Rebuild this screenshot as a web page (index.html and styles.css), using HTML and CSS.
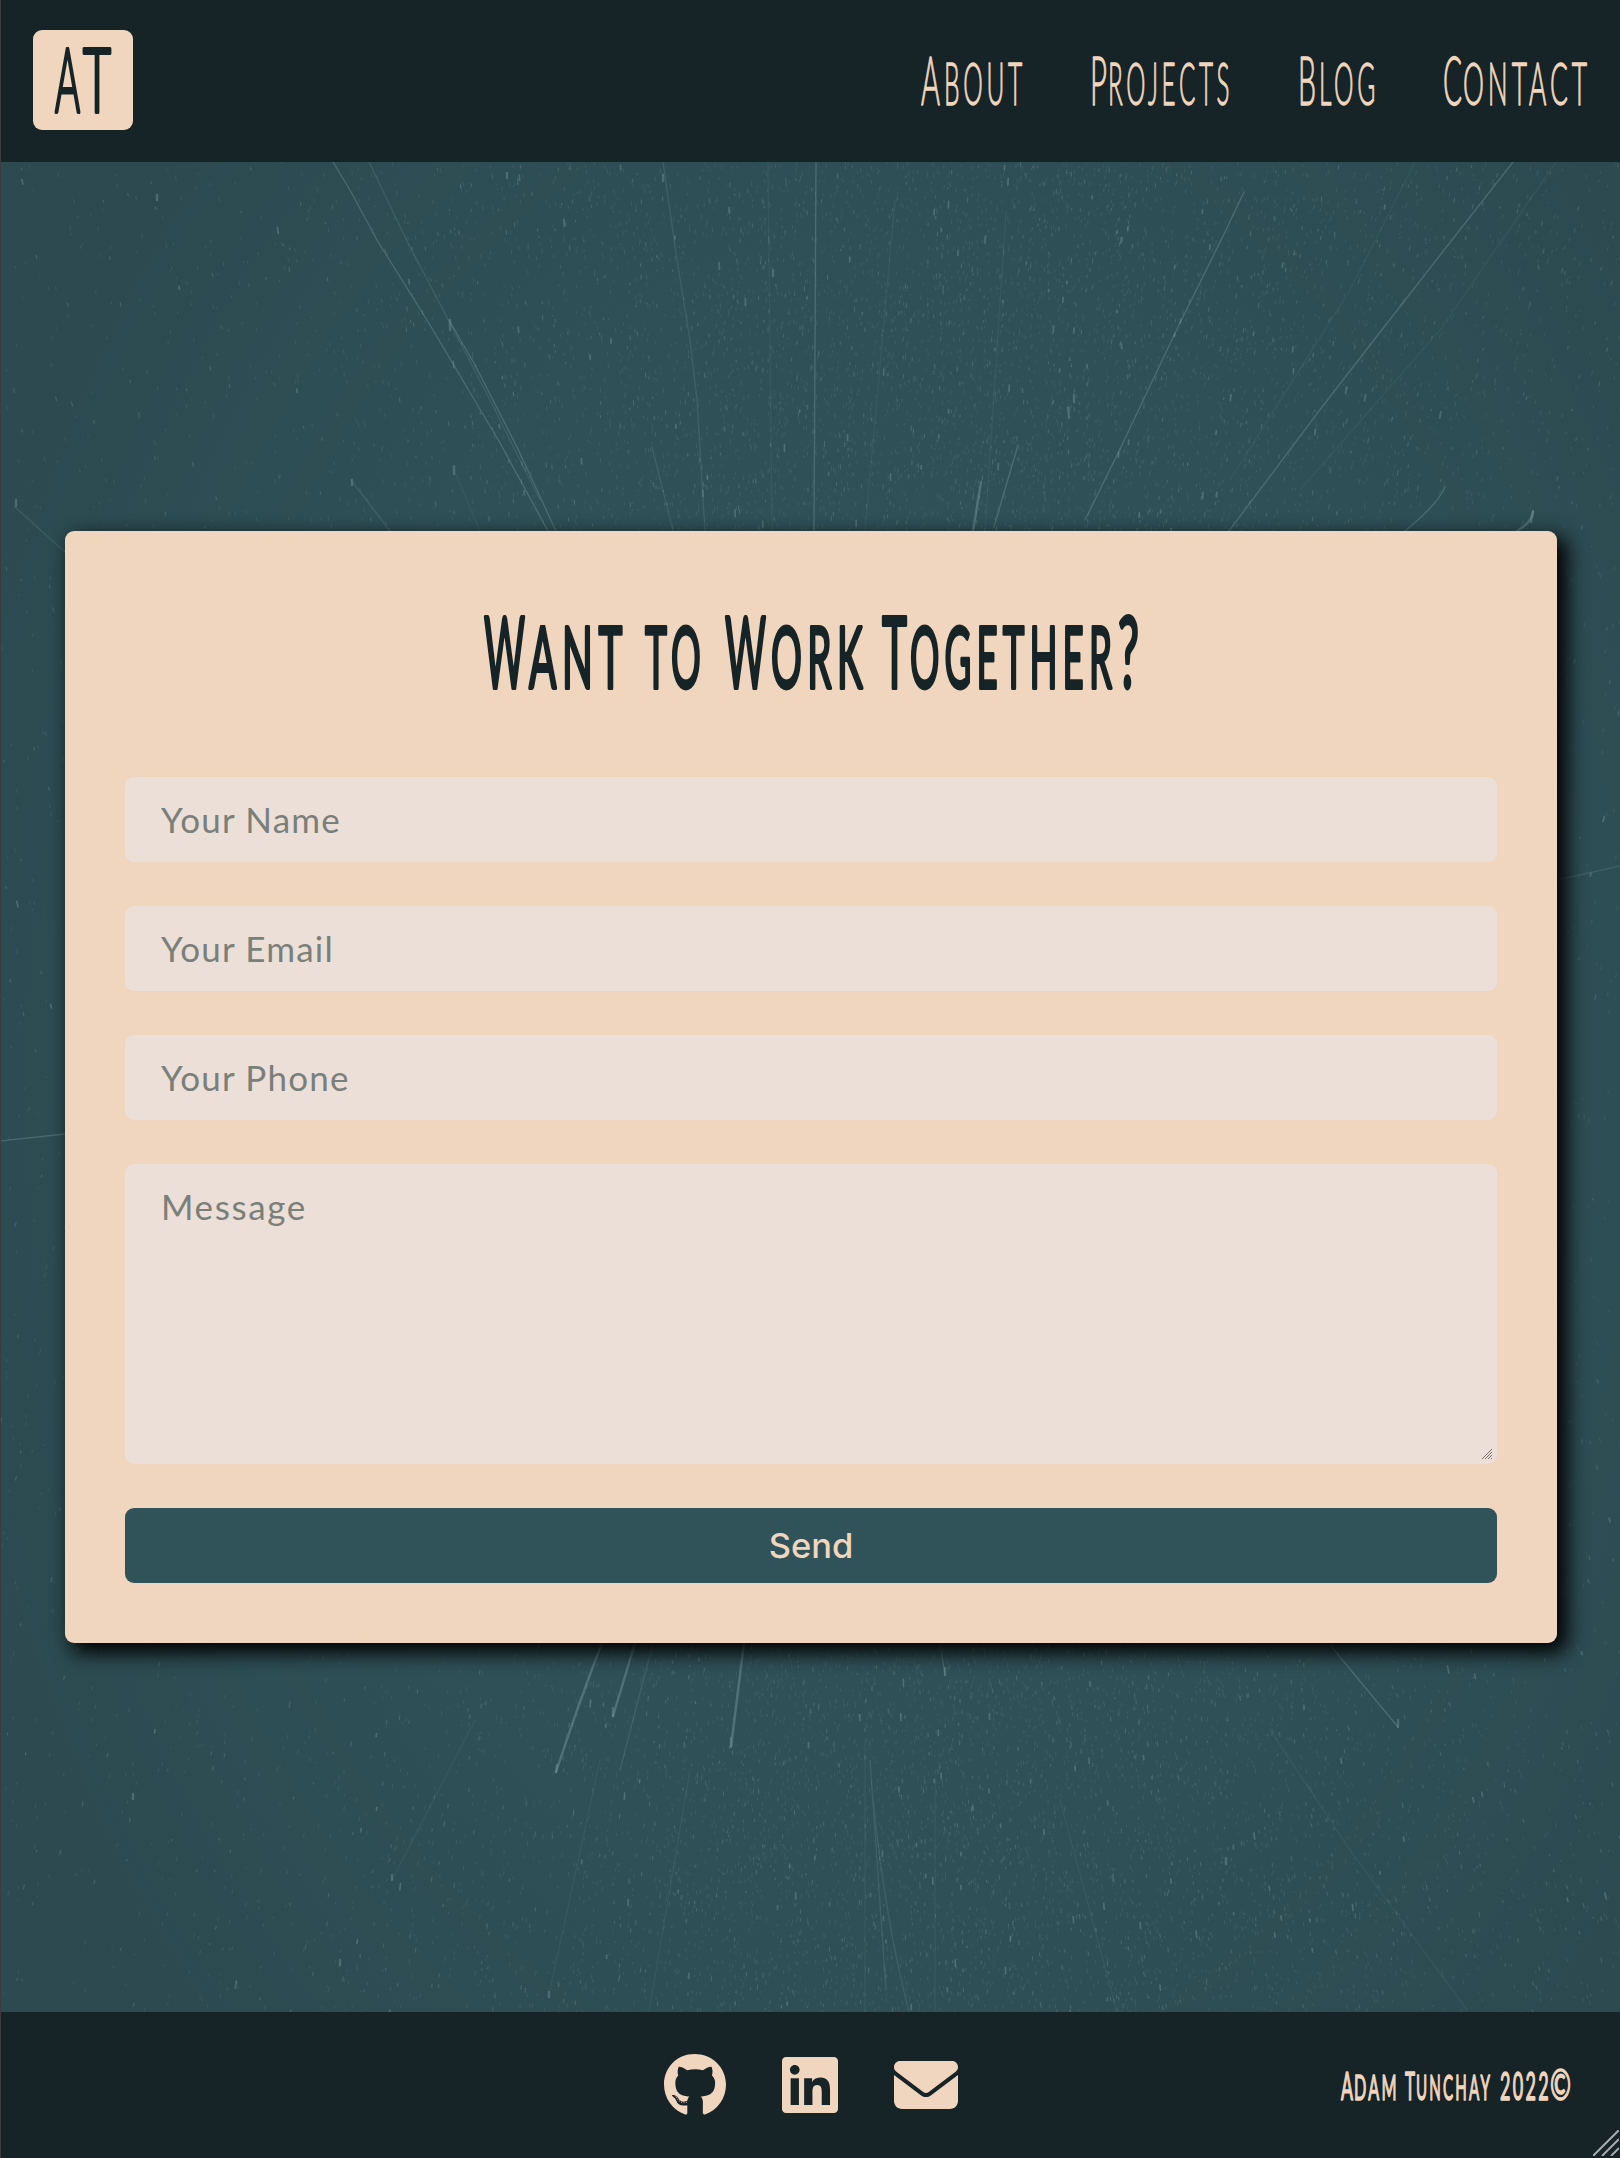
FILE: index.html
```html
<!DOCTYPE html>
<html lang="en">
<head>
<meta charset="utf-8">
<title>Adam Tunchay | Contact</title>
<link rel="stylesheet" href="styles.css">
</head>
<body>
<header class="header">
  <a class="logo" href="#" aria-label="AT">
    <svg class="lettering" width="100" height="100"><text class="logo-text" y="82"><tspan x="22" textLength="25" lengthAdjust="spacingAndGlyphs">A</tspan><tspan x="50" textLength="28" lengthAdjust="spacingAndGlyphs">T</tspan></text></svg>
  </a>
  <nav class="nav">
    <a href="#"><svg class="lettering" width="101" height="60"><text y="54.500"><tspan class="cap" x="-1" textLength="19" lengthAdjust="spacingAndGlyphs">A</tspan><tspan class="small" x="22" textLength="82" lengthAdjust="spacingAndGlyphs">BOUT</tspan></text></svg></a>
    <a href="#"><svg class="lettering" width="138" height="60"><text y="54.500"><tspan class="cap" x="-2" textLength="17" lengthAdjust="spacingAndGlyphs">P</tspan><tspan class="small" x="16" textLength="125" lengthAdjust="spacingAndGlyphs">ROJECTS</tspan></text></svg></a>
    <a href="#"><svg class="lettering" width="75" height="60"><text y="54.500"><tspan class="cap" x="-2" textLength="18" lengthAdjust="spacingAndGlyphs">B</tspan><tspan class="small" x="19" textLength="60" lengthAdjust="spacingAndGlyphs">LOG</tspan></text></svg></a>
    <a href="#"><svg class="lettering" width="148" height="60"><text y="54.500"><tspan class="cap" x="-1" textLength="19" lengthAdjust="spacingAndGlyphs">C</tspan><tspan class="small" x="19" textLength="128" lengthAdjust="spacingAndGlyphs">ONTACT</tspan></text></svg></a>
  </nav>
</header>

<main class="main">
  <svg class="stars" id="stars" viewBox="0 0 1619 1850" preserveAspectRatio="none" aria-hidden="true">
    <g class="trails" transform="translate(-1 -162)">
      <path d="M333 162L350 190 377 240 430 325 500 443 548 531"/>
      <path class="dim" d="M369 162L408 243 452 327 490 400 540 500"/>
      <path d="M449 320L475 365 517 447 556 531"/>
      <path class="dim" d="M663 162L677 260 690 340 697 400 705 531"/>
      <path d="M816 162L814 531"/>
      <path d="M1244 192L1226 230 1178 327 1121 447 1085 520"/>
      <path d="M1513 162L1448 245 1395 313 1322 407 1229 531"/>
      <path class="faint" d="M1556 162L1440 330 1300 490"/>
      <path class="faint" d="M1415 162L1350 290 1230 480"/>
      <path class="bright" d="M981 482L973 531"/>
      <path d="M1018 445L994 527"/>
      <path d="M1445 487Q1438 504 1405 531"/>
      <path class="bright" d="M1533 512Q1532 522 1517 531"/>
      <path class="dim" d="M15 507L65 552"/>
      <path class="dim" d="M351 480L390 531"/>
      <path class="dim" d="M652 447L673 531"/>
      <path class="faint" d="M454 470L480 531"/>
      <path class="faint" d="M768 162L772 531M1006 212L985 531M895 200L865 531"/>
      <path d="M0 1141L65 1134"/>
      <path class="dim" d="M1557 880L1620 866"/>
      <path class="bright" d="M602 1643Q578 1705 556 1772"/>
      <path class="bright" d="M635 1643L613 1716"/>
      <path class="dim" d="M653 1643L620 1770"/>
      <path class="bright" d="M744 1643L731 1747"/>
      <path d="M1330 1645L1398 1727"/>
      <path d="M940 1643L945 1675"/>
      <path class="dim" d="M872 1790Q885 1920 909 2012M870 1760L886 1990"/>
      <path class="faint" d="M475 1720L392 1880M690 1770L649 2012M1270 1730L1350 1850 1467 2010M1060 1800L1117 2012M600 1760L550 1990M865 1740V2012M935 1780V2012"/>
    </g>
    <g class="heads" transform="translate(-1 -162)">
      <path d="M1533 511l-2 11M1398 1720v7M945 1668v7M557 1765l-1 7M613 1708v8M731 1738v8M157 195v5M133 1794v5M392 1875v5M340 1960v5M549 1992v5M1226 1858v6M454 466v8M352 480v5M16 500v6M450 320v10M1068 408l1 10M1074 395v7M773 270v6M663 175v6M507 173v5"/>
    </g>
  </svg>
  <form class="card">
    <h1 class="title" aria-label="Want to Work Together?">
      <svg class="lettering" width="1372" height="142"><text y="97">
        <tspan class="cap" x="359" textLength="41" lengthAdjust="spacingAndGlyphs">W</tspan><tspan class="small" x="404" textLength="99" lengthAdjust="spacingAndGlyphs">ANT</tspan>
        <tspan class="small" x="520" textLength="61" lengthAdjust="spacingAndGlyphs">TO</tspan>
        <tspan class="cap" x="600" textLength="41" lengthAdjust="spacingAndGlyphs">W</tspan><tspan class="small" x="646" textLength="97" lengthAdjust="spacingAndGlyphs">ORK</tspan>
        <tspan class="cap" x="757" textLength="25" lengthAdjust="spacingAndGlyphs">T</tspan><tspan class="small" x="785" textLength="207" lengthAdjust="spacingAndGlyphs">OGETHER</tspan><tspan class="cap" x="993" textLength="21" lengthAdjust="spacingAndGlyphs">?</tspan></text></svg>
    </h1>
    <input class="field" type="text" placeholder="Your Name">
    <input class="field" type="email" placeholder="Your Email">
    <input class="field" type="tel" placeholder="Your Phone">
    <div class="message">
      <textarea class="field area" placeholder="Message"></textarea>
      <svg class="grip" width="10" height="10" viewBox="0 0 10 10"><path d="M0 10L10 0M3 10L10 3M6 10L10 6M9 10L10 9"/></svg>
    </div>
    <button class="send" type="button">Send</button>
  </form>
</main>

<footer class="footer">
  <div class="social">
    <a href="#" aria-label="GitHub"><svg width="62" height="64" viewBox="0 0 496 512"><path d="M165.900 397.400c0 2-2.300 3.600-5.200 3.600-3.300.3-5.600-1.300-5.600-3.600 0-2 2.300-3.600 5.200-3.600 3-.3 5.600 1.300 5.600 3.600zm-31.100-4.500c-.7 2 1.300 4.300 4.300 4.900 2.600 1 5.600 0 6.200-2s-1.300-4.300-4.300-5.200c-2.600-.7-5.500.3-6.200 2.300zm44.200-1.700c-2.900.7-4.900 2.600-4.600 4.900.3 2 2.900 3.300 5.900 2.600 2.900-.7 4.900-2.600 4.600-4.600-.3-1.900-3-3.200-5.900-2.900zM244.800 8C106.100 8 0 113.300 0 252c0 110.900 69.800 205.800 169.500 239.200 12.800 2.300 17.300-5.600 17.300-12.100 0-6.200-.3-40.400-.3-61.400 0 0-70 15-84.700-29.800 0 0-11.400-29.100-27.800-36.600 0 0-22.900-15.700 1.600-15.400 0 0 24.900 2 38.600 25.800 21.900 38.600 58.600 27.500 72.900 20.900 2.300-16 8.800-27.100 16-33.700-55.900-6.200-112.300-14.300-112.300-110.500 0-27.500 7.600-41.300 23.600-58.900-2.600-6.500-11.100-33.300 2.600-67.900 20.900-6.500 69 27 69 27 20-5.600 41.500-8.500 62.800-8.500s42.800 2.900 62.800 8.500c0 0 48.100-33.600 69-27 13.700 34.700 5.200 61.400 2.600 67.900 16 17.700 25.800 31.500 25.800 58.900 0 96.500-58.900 104.200-114.800 110.500 9.200 7.900 17 22.900 17 46.400 0 33.700-.3 75.400-.3 83.600 0 6.500 4.600 14.400 17.300 12.100C428.200 457.800 496 362.900 496 252 496 113.300 383.500 8 244.800 8zM97.200 352.900c-1.300 1-1 3.300.7 5.200 1.600 1.600 3.900 2.300 5.200 1 1.300-1 1-3.300-.7-5.200-1.600-1.600-3.900-2.300-5.200-1zm-10.800-8.100c-.7 1.300.3 2.900 2.300 3.900 1.600 1 3.600.7 4.300-.7.7-1.300-.3-2.900-2.300-3.900-2-.6-3.600-.3-4.300.7zm32.400 35.600c-1.600 1.300-1 4.300 1.300 6.200 2.300 2.300 5.200 2.600 6.500 1 1.300-1.300.7-4.300-1.300-6.200-2.200-2.300-5.200-2.600-6.500-1zm-11.400-14.700c-1.600 1-1.600 3.600 0 5.900 1.600 2.300 4.300 3.300 5.600 2.300 1.600-1.300 1.600-3.900 0-6.200-1.400-2.300-4-3.300-5.600-2z"/></svg></a>
    <a href="#" aria-label="LinkedIn"><svg width="56" height="64" viewBox="0 0 448 512"><path d="M416 32H31.900C14.300 32 0 46.500 0 64.300v383.400C0 465.500 14.300 480 31.900 480H416c17.600 0 32-14.500 32-32.300V64.300c0-17.800-14.400-32.300-32-32.300zM135.400 416H69V202.200h66.500V416zm-33.200-243c-21.300 0-38.500-17.300-38.500-38.500S80.900 96 102.200 96c21.200 0 38.500 17.300 38.500 38.500 0 21.300-17.200 38.500-38.500 38.500zm282.100 243h-66.400V312c0-24.800-.5-56.700-34.500-56.700-34.600 0-39.900 27-39.900 54.900V416h-66.400V202.200h63.700v29.200h.9c8.900-16.800 30.600-34.500 62.900-34.500 67.200 0 79.700 44.300 79.700 101.900V416z"/></svg></a>
    <a href="#" aria-label="Email"><svg width="64" height="64" viewBox="0 0 512 512"><path d="M48 64C21.500 64 0 85.500 0 112c0 15.100 7.100 29.300 19.200 38.400L236.800 313.600c11.400 8.500 27 8.500 38.400 0L492.800 150.400c12.100-9.100 19.200-23.300 19.200-38.400c0-26.500-21.500-48-48-48H48zM0 176V384c0 35.300 28.700 64 64 64H448c35.300 0 64-28.700 64-64V176L294.400 339.200c-22.800 17.100-54 17.100-76.800 0L0 176z"/></svg></a>
  </div>
  <p class="copyright"><svg class="lettering" width="230" height="44"><text y="36.500">
    <tspan class="cap" x="0" textLength="12" lengthAdjust="spacingAndGlyphs">A</tspan><tspan class="small" x="13" textLength="45" lengthAdjust="spacingAndGlyphs">DAM</tspan>
    <tspan class="cap" x="64" textLength="10" lengthAdjust="spacingAndGlyphs">T</tspan><tspan class="small" x="75" textLength="76" lengthAdjust="spacingAndGlyphs">UNCHAY</tspan>
    <tspan class="cap year" x="159" textLength="51" lengthAdjust="spacingAndGlyphs">2022</tspan><tspan class="mark" x="209" textLength="21" lengthAdjust="spacingAndGlyphs">©</tspan></text></svg></p>
  <svg class="corner" width="26" height="26" viewBox="0 0 26 26"><path d="M0 26L26 0M9 26L26 9M18 26L26 18"/></svg>
</footer>
<script src="stars.js"></script>
</body>
</html>
```

FILE: styles.css
```css
* { box-sizing: border-box; }

body {
  margin: 0;
  min-height: 2158px;
  display: flex;
  flex-direction: column;
  border-left: 1px solid #3c3b40;
  background: #162427;
  color: #f0d6be;
  font-family: Lato, "Open Sans", sans-serif;
}

a { color: inherit; display: block; }
svg { display: block; }

.lettering {
  overflow: visible;
  fill: currentColor;
  stroke: currentColor;
  stroke-linejoin: round;
  font-family: Lato, "Open Sans", sans-serif;
  font-weight: 300;
}

.header {
  height: 162px;
  padding: 0 28px 2px 32px;
  display: flex;
  align-items: center;
  justify-content: space-between;
}

.logo {
  width: 100px;
  height: 100px;
  border-radius: 9px;
  background: #f0d6be;
  color: #162427;
}
.logo-text { font-size: 89px; stroke-width: 4.2px; }

.nav { display: flex; gap: 69.5px; }
.nav .lettering { stroke-width: 1.3px; }
.nav .cap { font-size: 67px; }
.nav .small { font-size: 60px; letter-spacing: 9px; }

.main {
  position: relative;
  height: 1850px;
  padding: 0 63px 0 64px;
  display: flex;
  flex-direction: column;
  justify-content: center;
  background: radial-gradient(ellipse 60% 75% at 54% 50%, #305259 0%, #2f5057 60%, #2c4a50 100%);
}

.stars {
  position: absolute;
  inset: 0;
  width: 100%;
  height: 100%;
  overflow: hidden;
}
.trails { fill: none; stroke: #6f9297; stroke-width: 1.4; stroke-opacity: .42; stroke-linecap: round; }
.trails .bright { stroke-width: 2.4; stroke-opacity: .5; }
.trails .dim { stroke-opacity: .24; }
.trails .faint { stroke-opacity: .12; }
.heads { fill: none; stroke: #7c9a9d; stroke-width: 2.4; stroke-opacity: .4; stroke-linecap: round; }
.specks { fill: none; stroke: #8aa3a4; stroke-linecap: round; }

.card {
  position: relative;
  height: 1112px;
  padding: 60px;
  display: flex;
  flex-direction: column;
  gap: 44px;
  border-radius: 9px;
  background: #f0d6be;
  box-shadow: 8px 8px 20px 2px #000;
}

.title { margin: 0; height: 142px; color: #162427; }
.title .lettering { font-weight: 400; stroke-width: 3.8px; }
.title .cap { font-size: 98px; }
.title .small { font-size: 86px; letter-spacing: 12px; }

.field {
  display: block;
  width: 100%;
  height: 85px;
  padding: 0 36px 1px;
  border: 0;
  border-radius: 9px;
  background: #ecdfd7;
  color: #162427;
  font: 400 35px/44px Lato, "Open Sans", sans-serif;
  letter-spacing: 1.2px;
}
.field::placeholder { color: #7a7f7a; opacity: 1; }

.message { position: relative; height: 300px; }
.area { height: 300px; padding-top: 20px; resize: none; letter-spacing: 1.6px; }
.grip {
  position: absolute;
  right: 5px;
  bottom: 5px;
  stroke: #77726f;
  stroke-width: 1;
}

.send {
  height: 75px;
  padding: 1px 0 0;
  border: 0;
  border-radius: 9px;
  background: #305259;
  color: #f0d6be;
  font: 450 34.5px/74px Inter, sans-serif;
}

.footer {
  position: relative;
  height: 146px;
  padding: 0 49px 0 663px;
  display: flex;
  align-items: center;
  justify-content: space-between;
}
.social { display: flex; gap: 56px; fill: #f0d6be; }
.copyright { margin: 0; }
.copyright .lettering { font-weight: 400; stroke-width: 1.5px; }
.copyright .cap { font-size: 39px; }
.copyright .small { font-size: 35px; letter-spacing: 5px; }
.copyright .year { letter-spacing: 5px; }
.copyright .mark { font-size: 43px; }
.corner {
  position: absolute;
  right: 1px;
  bottom: 2px;
  stroke: #a9abac;
  stroke-width: 2;
}
```

FILE: stars.js
```js
// Scatters faint specks, stretched along the fall line, across the backdrop.
(function () {
  var seed = 7;
  function rnd() {
    seed = (seed * 16807) % 2147483647;
    return seed / 2147483647;
  }
  var ns = "http://www.w3.org/2000/svg";
  var svg = document.getElementById("stars");
  var layers = [
    { count: 24000, len: 2.6, width: 1, opacity: 0.16 },
    { count: 4000, len: 3, width: 1.2, opacity: 0.27 },
    { count: 420, len: 5, width: 1.7, opacity: 0.36 }
  ];
  layers.forEach(function (layer) {
    var d = "";
    for (var i = 0; i < layer.count; i++) {
      var spread = (rnd() + rnd() + rnd()) / 3 - 0.5;
      var y = rnd() * 1850;
      // The cloud narrows towards the middle of the page.
      var reach = 700 + Math.abs(y - 925) * 0.9;
      var x = rnd() < 0.15 ? rnd() * 1619 : 970 + spread * reach * 1.3;
      var l = layer.len * (0.4 + rnd());
      var lean = (x - 830) / 830 * (y < 925 ? -0.25 : 0.25);
      d += "M" + x.toFixed(1) + " " + y.toFixed(1) +
        "l" + (lean * l).toFixed(1) + " " + l.toFixed(1);
    }
    var path = document.createElementNS(ns, "path");
    path.setAttribute("class", "specks");
    path.setAttribute("d", d);
    path.setAttribute("stroke-width", layer.width);
    path.setAttribute("stroke-opacity", layer.opacity);
    svg.appendChild(path);
  });
})();
```
